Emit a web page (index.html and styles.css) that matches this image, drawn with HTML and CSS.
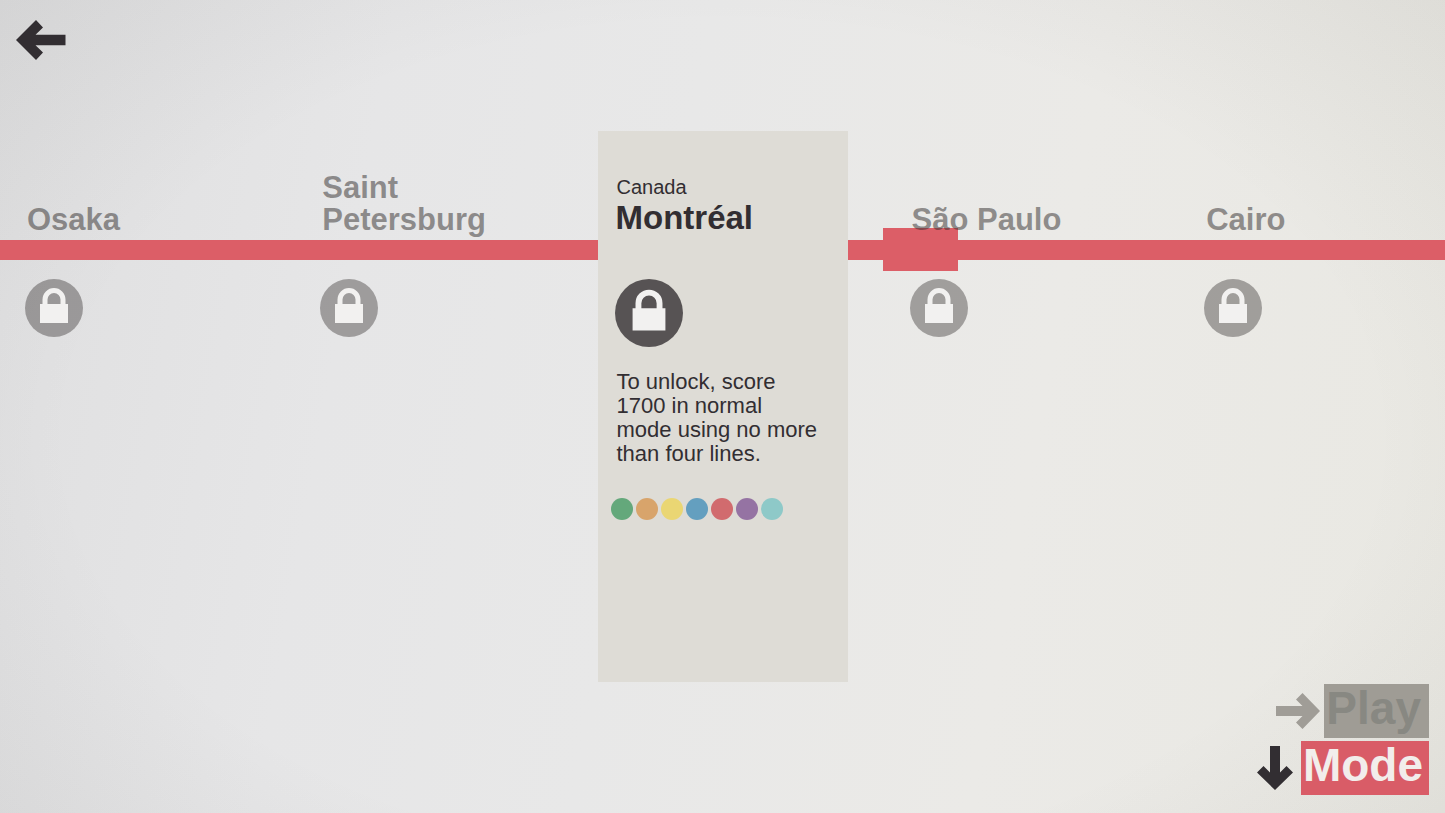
FILE: index.html
```html
<!DOCTYPE html>
<html lang="en">
<head>
<meta charset="utf-8">
<meta name="viewport" content="width=device-width, initial-scale=1">
<title>City select</title>
<link rel="stylesheet" href="styles.css">
</head>
<body>
<svg class="defs" width="0" height="0" aria-hidden="true">
  <symbol id="lock" viewBox="0 0 58 58">
    <circle cx="29" cy="29" r="29" fill="currentColor"/>
    <path class="lock-shape" d="M15 25h28v19H15z"/>
    <path class="lock-shackle" d="M20 25.500V20.600a9 9 0 0 1 18 0v4.900"/>
  </symbol>
</svg>

<header class="top">
  <button class="icon-button" type="button" aria-label="Back">
    <svg class="arrow-left" viewBox="0 0 50 40"><path d="M0 20 20 0l7 7.500-7.500 7.200h30v10.600h-30l7.500 7.200-7 7.500z"/></svg>
  </button>
</header>

<main class="map">
  <section class="side side-left">
    <div class="names">
      <h2 class="name">Osaka</h2>
      <h2 class="name">Saint<br>Petersburg</h2>
    </div>
    <div class="line"></div>
    <div class="locks">
      <svg class="lock" role="img" aria-label="Locked"><use href="#lock"/></svg>
      <svg class="lock" role="img" aria-label="Locked"><use href="#lock"/></svg>
    </div>
  </section>

  <article class="card">
    <p class="country">Canada</p>
    <h1 class="city">Montréal</h1>
    <svg class="lock lock-large" role="img" aria-label="Locked"><use href="#lock"/></svg>
    <p class="goal">To unlock, score<br>1700 in normal<br>mode using no more<br>than four lines.</p>
    <div class="dots">
      <span class="dot green"></span>
      <span class="dot orange"></span>
      <span class="dot yellow"></span>
      <span class="dot blue"></span>
      <span class="dot red"></span>
      <span class="dot purple"></span>
      <span class="dot teal"></span>
    </div>
  </article>

  <section class="side side-right">
    <div class="names">
      <h2 class="name">São Paulo</h2>
      <h2 class="name">Cairo</h2>
    </div>
    <div class="line"><span class="train"></span></div>
    <div class="locks">
      <svg class="lock" role="img" aria-label="Locked"><use href="#lock"/></svg>
      <svg class="lock" role="img" aria-label="Locked"><use href="#lock"/></svg>
    </div>
  </section>
</main>

<footer class="actions">
  <button class="action play" type="button" disabled>
    <svg class="arrow-right" viewBox="0 0 44 36"><path d="M44 18 26.500 0l-6.500 6.500 6.500 6.500H0v10h26.500L20 29.500l6.500 6.500z"/></svg>
    <span class="label">Play</span>
  </button>
  <button class="action mode" type="button">
    <svg class="arrow-down" viewBox="0 0 36 44"><path d="M18 44 0 26.500 6.500 20l6.500 6.500V0h10v26.500l6.500-6.500 6.500 6.500z"/></svg>
    <span class="label">Mode</span>
  </button>
</footer>
</body>
</html>
```
FILE: styles.css
```css
* {
  box-sizing: border-box;
  margin: 0;
  padding: 0;
}

body {
  min-height: 100vh;
  display: flex;
  flex-direction: column;
  overflow-x: hidden;
  color: #322e32;
  font-family: "Liberation Sans", Arial, sans-serif;
  background:
    radial-gradient(ellipse 75% 85% at 50% 54%, rgba(0, 0, 0, 0) 60%, rgba(30, 30, 25, 0.07) 100%),
    linear-gradient(100deg, #dfdfe0 0%, #e6e6e7 25%, #e8e8e8 45%, #ebeae7 70%, #e9e8e2 100%);
}

button {
  border: 0;
  background: none;
  font: inherit;
  color: inherit;
  cursor: pointer;
}

svg {
  display: block;
  fill: currentColor;
}

.defs {
  position: absolute;
}

.top {
  padding: 20px 16px;
}

.icon-button {
  display: block;
}

.arrow-left {
  width: 50px;
  height: 40px;
}

.map {
  flex: 1;
  display: grid;
  grid-template-columns: minmax(0, 1fr) 250px minmax(0, 1fr);
  padding-top: 51px;
}

.names,
.locks {
  display: grid;
}

.side-left .names,
.side-left .locks {
  grid-template-columns: 295fr 277fr;
  padding-left: 25px;
}

.side-right .names,
.side-right .locks {
  grid-template-columns: 295fr 241fr;
  padding-left: 62px;
}

.names {
  position: relative;
  z-index: 1;
  height: 109px;
  align-items: end;
  padding-bottom: 4px;
}

.name {
  padding-left: 2px;
  color: rgba(50, 46, 46, 0.5);
  font-size: 31px;
  line-height: 32px;
}

.line {
  position: relative;
  height: 20px;
  background: #dc5e67;
}

.train {
  position: absolute;
  top: -12px;
  left: 35px;
  width: 75px;
  height: 43px;
  background: #dc5e67;
}

.locks {
  padding-top: 19px;
}

.lock {
  width: 58px;
  height: 58px;
  color: rgba(50, 46, 46, 0.4);
}

.lock-shape {
  fill: #f2f1f0;
}

.lock-shackle {
  fill: none;
  stroke: #f2f1f0;
  stroke-width: 5;
}

.card {
  padding: 44px 0 24px 17px;
  background: #dedcd6;
}

.country {
  padding-left: 2px;
  font-size: 20px;
  line-height: 24px;
}

.city {
  padding-left: 1px;
  font-size: 33px;
  line-height: 38px;
}

.lock-large {
  width: 68px;
  height: 68px;
  margin-top: 42px;
  color: #575354;
}

.goal {
  margin-top: 23px;
  padding-left: 2px;
  font-size: 22px;
  line-height: 24px;
}

.dots {
  display: flex;
  gap: 3px;
  margin: 32px 0 0 -4px;
}

.dot {
  width: 22px;
  height: 22px;
  border-radius: 50%;
}

.green { background: #64a87b; }
.orange { background: #d8a46b; }
.yellow { background: #ead673; }
.blue { background: #649fbf; }
.red { background: #d16b6e; }
.purple { background: #9573a3; }
.teal { background: #8ec9c8; }

.actions {
  display: flex;
  flex-direction: column;
  align-items: flex-end;
  gap: 3px;
  padding: 2px 16px 18px;
}

.action {
  display: flex;
  align-items: center;
}

.label {
  height: 54px;
  padding: 0 8px 0 2px;
  font-size: 46px;
  font-weight: bold;
  line-height: 48px;
  text-align: left;
}

.play {
  gap: 4px;
  color: #a09d97;
  cursor: default;
}

.play .label {
  background: #9f9c95;
  color: #888882;
}

.mode {
  gap: 8px;
}

.mode .label {
  padding-right: 6px;
  background: #d95c67;
  color: #f2edeb;
}

.arrow-right {
  width: 44px;
  height: 36px;
}

.arrow-down {
  width: 36px;
  height: 44px;
}
```
